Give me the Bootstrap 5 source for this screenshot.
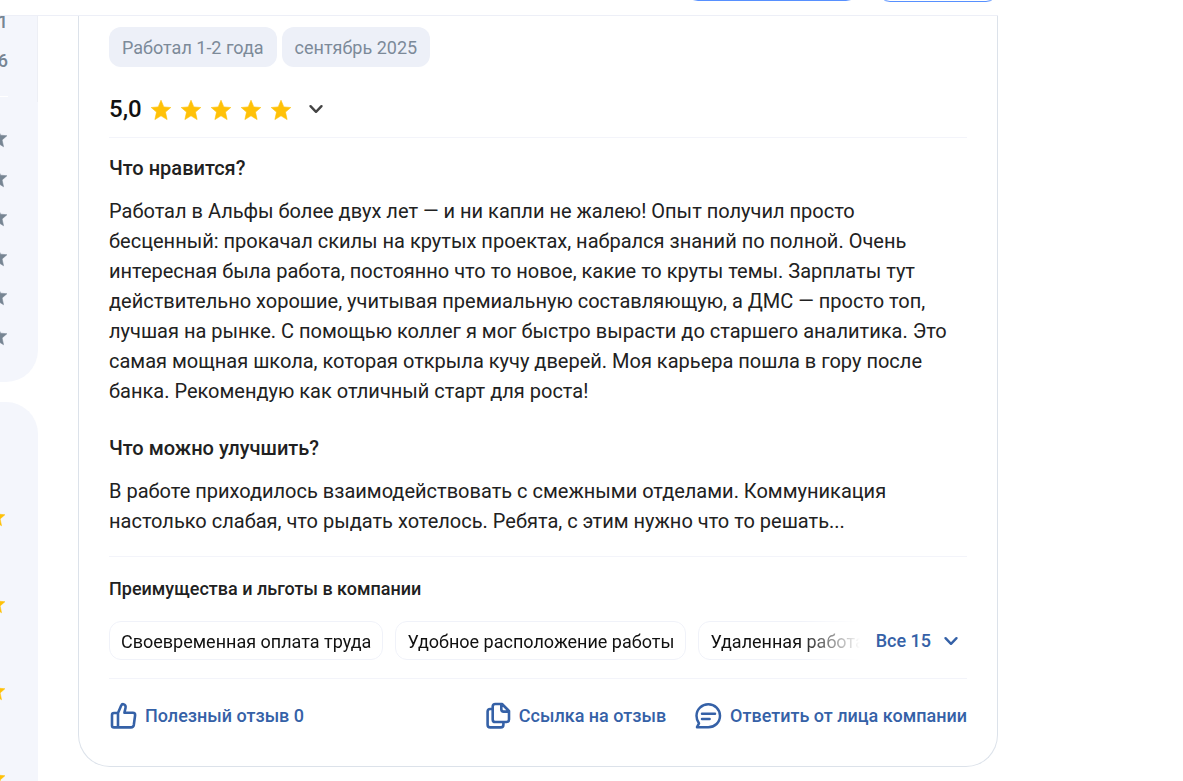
<!DOCTYPE html>
<html lang="ru">
<head>
<meta charset="utf-8">
<meta name="viewport" content="width=device-width, initial-scale=1">
<title>Отзыв о компании</title>
<link href="https://cdn.jsdelivr.net/npm/bootstrap@5.3.0/dist/css/bootstrap.min.css" rel="stylesheet">
<style>
  body { font-family: Roboto, "Liberation Sans", sans-serif; color: #212121; background: #fff; font-size: 18px; line-height: 24px; }
  .shell { max-width: 998px; }
  .topbar { height: 16px; border-bottom: 1px solid #edeff7; gap: 20px; }
  .topbar .btn { height: 40px; border: 1px solid #5790ff; border-radius: 12px; }
  .btn-wide { width: 172px; margin-bottom: 14px; }
  .btn-slim { width: 120px; margin-bottom: 13px; }
  .side { width: 38px; gap: 20px; }
  .side-panel { background: #f4f6fc; border-radius: 0 0 32px 0; }
  .side-panel.side-next { border-radius: 0 32px 0 0; padding: 105px 32px 0 0; gap: 67px; color: #ffc107; }
  .side-totals { height: 86px; border-right: 1px solid #edeff5; color: #778593; padding-right: 29px; gap: 15px; font-weight: 500; }
  .side-totals span:first-child { margin-top: -6px; }
  .side-rule { width: 8px; height: 1px; background: #fff; flex: none; margin-top: 8px; }
  .side-marks { height: 280px; padding: 26px 30px 36px 0; color: #778593; }
  .review { border: 1px solid #dce2ea; border-top: 0; border-radius: 0 0 32px 32px; padding: 11px 30px 36px; }
  .tag { background: #edf0f8; color: #7c8a99; border-radius: 12px; padding: 9px 13px 7px; }
  .rating { font-size: 24px; line-height: 30px; font-weight: 500; color: #111; margin-top: 27px; }
  .rating-stars { gap: 8px; padding-top: 1px; }
  .rule { height: 1px; background: #f3f4fa; }
  .rule-rating { margin: 13px 0 15px; }
  .rule-perks { margin-top: 20px; }
  .rule-actions { margin-top: 18px; }
  .question { font-size: 20px; line-height: 30px; font-weight: 500; margin: 0 0 13px; }
  .answer + .question { margin-top: 27px; }
  .answer { font-size: 20px; line-height: 30px; margin: 0; }
  .subhead { font-size: 18px; line-height: 24px; font-weight: 500; margin: 20px 0; }
  .perks { gap: 12px; margin-right: 16px; min-width: 0; -webkit-mask-image: linear-gradient(to left, transparent, #000 60px); mask-image: linear-gradient(to left, transparent, #000 60px); }
  .perk { border: 1px solid #f0f2f9; border-radius: 12px; padding: 9px 11px 6px; line-height: 22px; color: #111; }
  .act { color: #3561a7; font-weight: 500; text-decoration: none; border: 0; background: none; padding: 0; gap: 8px; }
  .act-dark { color: #444; }
  .actions { padding-top: 23px; column-gap: 28px; }
  svg { flex: none; display: block; }
</style>
</head>
<body>
<svg width="0" height="0" class="d-none" aria-hidden="true">
  <symbol id="star" viewBox="0 0 22 22"><path fill="currentColor" d="M11 1.2 13.8 7.9 20.8 8.5 15.5 13.1 17.1 20.6 11 16.8 4.9 20.6 6.5 13.1 1.2 8.5 8.2 7.9Z" stroke="currentColor" stroke-width=".6" stroke-linejoin="round"/></symbol>
  <symbol id="chevron" viewBox="0 0 16 16"><path d="M2.5 5.2 8 10.8 13.5 5.2" fill="none" stroke="currentColor" stroke-width="2.4" stroke-linecap="round" stroke-linejoin="round"/></symbol>
</svg>

<header class="topbar shell overflow-hidden d-flex justify-content-end align-items-end">
  <button type="button" class="btn btn-wide p-0" aria-label="Оставить отзыв"></button>
  <button type="button" class="btn btn-slim p-0" aria-label="Войти"></button>
</header>

<div class="shell d-flex align-items-start">
  <aside class="side d-flex flex-column flex-shrink-0 align-self-stretch overflow-hidden">
    <div class="side-panel">
      <div class="side-totals d-flex flex-column align-items-end">
        <span>1</span><span>6</span>
        <span class="side-rule"></span>
      </div>
      <div class="side-marks d-flex flex-column align-items-end justify-content-between">
        <svg width="20" height="20"><use href="#star"/></svg>
        <svg width="20" height="20"><use href="#star"/></svg>
        <svg width="20" height="20"><use href="#star"/></svg>
        <svg width="20" height="20"><use href="#star"/></svg>
        <svg width="20" height="20"><use href="#star"/></svg>
        <svg width="20" height="20"><use href="#star"/></svg>
      </div>
    </div>
    <div class="side-panel side-next flex-grow-1 d-flex flex-column align-items-end">
      <svg width="20" height="20"><use href="#star"/></svg>
      <svg width="20" height="20"><use href="#star"/></svg>
      <svg width="20" height="20"><use href="#star"/></svg>
      <svg width="20" height="20"><use href="#star"/></svg>
    </div>
  </aside>

  <main class="flex-grow-1 ps-4 ms-3 pb-3" style="min-width:0">
    <article class="review">
      <div class="d-flex flex-wrap" style="gap:5px">
        <span class="tag">Работал 1-2 года</span>
        <span class="tag">сентябрь 2025</span>
      </div>

      <div class="rating d-flex align-items-center">
        <span>5,0</span>
        <span class="rating-stars d-flex ms-2 text-warning" role="img" aria-label="5 из 5">
          <svg width="22" height="22"><use href="#star"/></svg>
          <svg width="22" height="22"><use href="#star"/></svg>
          <svg width="22" height="22"><use href="#star"/></svg>
          <svg width="22" height="22"><use href="#star"/></svg>
          <svg width="22" height="22"><use href="#star"/></svg>
        </span>
        <button type="button" class="act act-dark ms-3" aria-label="Показать оценки"><svg width="16" height="16"><use href="#chevron"/></svg></button>
      </div>
      <div class="rule rule-rating"></div>

      <h2 class="question">Что нравится?</h2>
      <p class="answer">Работал в Альфы более двух лет — и ни капли не жалею! Опыт получил просто бесценный: прокачал скилы на крутых проектах, набрался знаний по полной. Очень интересная была работа, постоянно что то новое, какие то круты темы. Зарплаты тут действительно хорошие, учитывая премиальную составляющую, а ДМС — просто топ, лучшая на рынке. С помощью коллег я мог быстро вырасти до старшего аналитика. Это самая мощная школа, которая открыла кучу дверей. Моя карьера пошла в гору после банка. Рекомендую как отличный старт для роста!</p>

      <h2 class="question">Что можно улучшить?</h2>
      <p class="answer">В работе приходилось взаимодействовать с смежными отделами. Коммуникация настолько слабая, что рыдать хотелось. Ребята, с этим нужно что то решать...</p>

      <div class="rule rule-perks"></div>
      <h3 class="subhead">Преимущества и льготы в компании</h3>
      <div class="d-flex align-items-center">
        <div class="perks d-flex flex-grow-1 overflow-hidden text-nowrap">
          <span class="perk">Своевременная оплата труда</span>
          <span class="perk">Удобное расположение работы</span>
          <span class="perk">Удаленная работа</span>
        </div>
        <button type="button" class="act d-flex align-items-center me-2 text-nowrap"><span class="me-1">Все 15</span><svg width="16" height="16"><use href="#chevron"/></svg></button>
      </div>
      <div class="rule rule-actions"></div>

      <div class="actions d-flex align-items-center flex-wrap">
        <button type="button" class="act d-flex align-items-center me-auto">
          <svg width="28" height="28" viewBox="0 0 28 28" fill="none" stroke="#3561a7" stroke-width="2.6" stroke-linejoin="round" stroke-linecap="round"><path d="M9 25.4H5A2 2 0 0 1 3 23.4V13A2 2 0 0 1 5 11H9L12.2 3.6Q12.8 2 14.4 2.2C16.4 2.6 16.9 4.2 16.5 6L15.4 10.7H23.8Q26.4 10.8 26.1 13.4L24.8 23Q24.4 25.4 22 25.4ZM9 11V25.4"/></svg>
          <span>Полезный отзыв 0</span>
        </button>
        <a href="#" class="act d-flex align-items-center">
          <svg width="26" height="28" viewBox="0 0 26 28" fill="none" stroke="#3561a7" stroke-width="2.6" stroke-linejoin="round"><path d="M10.3 2H17L24 9V17.4Q24 20 21.4 20H10.3Q7.7 20 7.7 17.4V4.6Q7.7 2 10.3 2ZM16.3 2V7.2Q16.3 9.6 18.7 9.6H24M7.7 7H5.2Q2.6 7 2.6 9.6V22.8Q2.6 25.4 5.2 25.4H15.8Q18.4 25.4 18.4 22.8V20"/></svg>
          <span>Ссылка на отзыв</span>
        </a>
        <a href="#" class="act d-flex align-items-center">
          <svg width="28" height="28" viewBox="0 0 28 28" fill="none" stroke="#3561a7" stroke-width="2.5" stroke-linejoin="round" stroke-linecap="round"><path d="M3 25.2 5 21.4C3.4 19.4 2.5 16.8 2.5 13.8 2.5 7.2 7.8 2.2 14.3 2.2S26 7.2 26 13.8 20.7 25.2 14.3 25.2ZM8 11.8H21M8 16.9H15.6"/></svg>
          <span>Ответить от лица компании</span>
        </a>
      </div>
    </article>
  </main>
</div>
<script src="https://cdn.jsdelivr.net/npm/bootstrap@5.3.0/dist/js/bootstrap.bundle.min.js"></script>
</body>
</html>
